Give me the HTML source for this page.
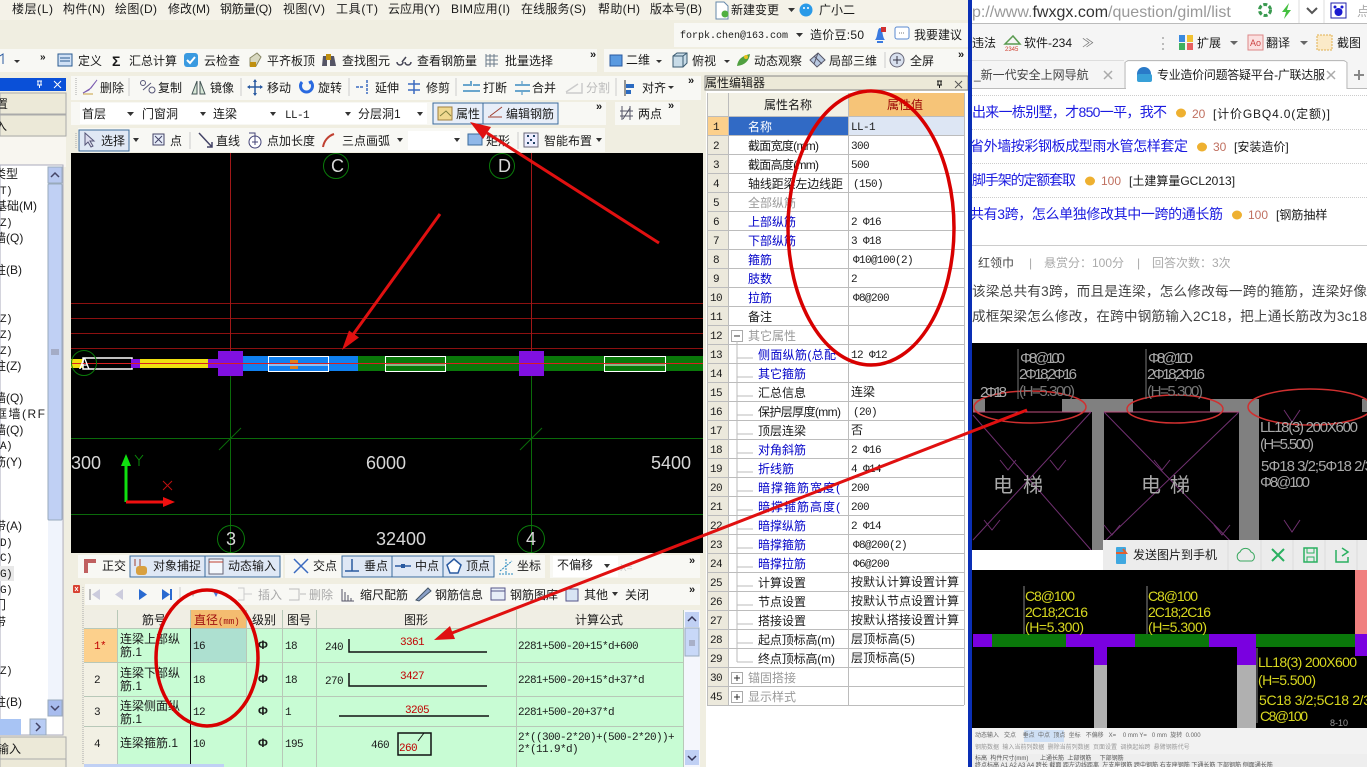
<!DOCTYPE html>
<html><head><meta charset="utf-8"><style>
html,body{margin:0;padding:0;background:#f0eee1;overflow:hidden}
svg{display:block}
text{font-family:"Liberation Sans","WenQuanYi Zen Hei","Noto Sans CJK SC",sans-serif;font-size:12px;fill:#1a1a1a;white-space:pre}
.m{font-family:"Liberation Mono","WenQuanYi Zen Hei",monospace;font-size:11px;letter-spacing:-.6px}
.g{fill:#9a9a9a}.b{fill:#0000c8}.r{fill:#c00000}
.l{font-size:14px;fill:#1a1ae0}.p{font-size:13.6px;fill:#444}
.w{font-size:18px;fill:#d8d8d8;font-family:"Liberation Sans",sans-serif}
.y{font-size:14px;fill:#d8d820;font-family:"Liberation Sans",sans-serif}
.t{font-family:"Liberation Sans","WenQuanYi Zen Hei",sans-serif;font-size:15px;fill:#a8a8a8}
</style></head><body>
<svg width="1367" height="767" viewBox="0 0 1367 767" xmlns="http://www.w3.org/2000/svg">
<!-- browser -->
<rect x="970" y="0" width="397" height="767" fill="#fff"/>
<rect x="970" y="0" width="397" height="23" fill="#fff"/>
<rect x="970" y="23" width="397" height="1" fill="#bbb"/>
<rect x="970" y="24" width="397" height="64" fill="#f5f5f5"/>
<text x="972" y="17" style="font-size:16px;fill:#999">p://www.<tspan fill="#333">fwxgx.com</tspan>/question/giml/list</text>
<circle cx="1265" cy="10" r="5.5" fill="none" stroke="#3a9a50" stroke-width="3" stroke-dasharray="4 2"/>
<path d="M1289 3l-7 9h4l-2 7 7-9h-4z" fill="#44c040"/>
<path d="M1299 0v23M1324 0v23" stroke="#ddd"/>
<path d="M1307 8l5 5 5-5" fill="none" stroke="#555" stroke-width="2"/>
<rect x="1331" y="3" width="15" height="15" fill="#fff" stroke="#22a"/><circle cx="1338.500" cy="12" r="4" fill="#1a1ad0"/><circle cx="1335" cy="7" r="1.500" fill="#1a1ad0"/><circle cx="1342" cy="7" r="1.500" fill="#1a1ad0"/>
<text x="1357" y="16" style="font-size:13px;fill:#aaa">点</text>
<text x="972" y="47" style="font-size:12px">违法</text>
<path d="M1005 44l8-8 7 8z" fill="none" stroke="#5a9a50" stroke-width="1.500"/><text x="1005" y="51" style="font-size:6px;fill:#d04030">2345</text>
<text x="1024" y="47">软件-234</text>
<text x="1082" y="47" style="fill:#777">≫</text>
<path d="M1163 37v2M1163 43v2M1163 48v2" stroke="#bbb" stroke-width="2"/>
<rect x="1179" y="35" width="6" height="7" fill="#3a8ae0"/><rect x="1187" y="35" width="6" height="7" fill="#f0c030"/><rect x="1179" y="43" width="6" height="7" fill="#40b060"/><rect x="1187" y="43" width="6" height="7" fill="#e86060"/>
<text x="1197" y="47">扩展</text><path d="M1230 41h8l-4 4z" fill="#666"/>
<rect x="1248" y="35" width="15" height="15" fill="#fbe0e0" stroke="#d88"/><text x="1250" y="46" style="font-size:9px;fill:#c44">Ao</text>
<text x="1266" y="47">翻译</text><path d="M1300 41h8l-4 4z" fill="#666"/>
<rect x="1317" y="35" width="15" height="15" fill="#fbeac8" stroke="#e0b050" stroke-dasharray="2 1"/>
<text x="1337" y="47">截图</text>
<rect x="970" y="60" width="154" height="1" fill="#ddd"/><rect x="970" y="61" width="154" height="27" fill="#f5f5f5"/>
<text x="974" y="79" style="font-size:12px;fill:#444">_新一代安全上网导航</text>
<path d="M1104 71l8 8M1112 71l-8 8" stroke="#aaa" stroke-width="1.500"/>
<path d="M970 88.500h155v-26l3-2h216l3 2v26h20" fill="#f5f5f5" stroke="#bbb"/>
<rect x="1126" y="62" width="220" height="28" fill="#fff"/>
<path d="M972 88.500h154" stroke="#bbb"/>
<circle cx="1144" cy="74" r="7" fill="#2a7ac8"/><rect x="1137" y="74" width="15" height="8" rx="2" fill="#38a0d8"/>
<text x="1157" y="79" style="font-size:12px" textLength="168">专业造价问题答疑平台-广联达服</text>
<rect x="1325" y="64" width="18" height="22" fill="#fff"/>
<path d="M1327 71l8 8M1335 71l-8 8" stroke="#aaa" stroke-width="1.500"/>
<path d="M1354 75h10M1359 70v10" stroke="#888" stroke-width="2"/>
<rect x="970" y="89" width="397" height="254" fill="#fff"/>
<path d="M970 95.500h397M970 129.500h397M970 163.500h397M970 197.500h397" stroke="#ccc" stroke-dasharray="1 1"/>
<g>
<text x="972" y="117" class="l" textLength="195">出来一栋别墅，才850一平，我不</text>
<ellipse cx="1181" cy="113" rx="5" ry="4.500" fill="#eeb030"/><text x="1192" y="118" style="font-size:12px;fill:#c07060">20</text><text x="1213" y="118" style="font-size:12px" textLength="117">[计价GBQ4.0(定额)]</text>
<text x="970" y="151" class="l" textLength="218">省外墙按彩钢板成型雨水管怎样套定</text>
<ellipse cx="1202" cy="147" rx="5" ry="4.500" fill="#eeb030"/><text x="1213" y="151" style="font-size:12px;fill:#c07060">30</text><text x="1234" y="151" style="font-size:12px">[安装造价]</text>
<text x="972" y="185" class="l" textLength="104">脚手架的定额套取</text>
<ellipse cx="1090" cy="181" rx="5" ry="4.500" fill="#eeb030"/><text x="1101" y="185" style="font-size:12px;fill:#c07060">100</text><text x="1129" y="185" style="font-size:12px">[土建算量GCL2013]</text>
<text x="970" y="219" class="l" textLength="253">共有3跨，怎么单独修改其中一跨的通长筋</text>
<ellipse cx="1237" cy="215" rx="5" ry="4.500" fill="#eeb030"/><text x="1248" y="219" style="font-size:12px;fill:#c07060">100</text><text x="1276" y="219" style="font-size:12px">[钢筋抽样</text>
</g>
<rect x="970" y="245" width="397" height="1" fill="#ccc"/>
<text x="978" y="267" style="font-size:12px;fill:#444">红领巾</text>
<text x="1029" y="267" style="fill:#aaa">|</text>
<text x="1044" y="267" style="font-size:12px;fill:#aaa">悬赏分：100分</text>
<text x="1137" y="267" style="fill:#aaa">|</text>
<text x="1152" y="267" style="font-size:12px;fill:#aaa">回答次数：3次</text>
<text x="972" y="296" class="p" textLength="395">该梁总共有3跨，而且是连梁，怎么修改每一跨的箍筋，连梁好像</text>
<text x="972" y="321" class="p" textLength="395">成框架梁怎么修改，在跨中钢筋输入2C18，把上通长筋改为3c18</text>
<!-- image 1 -->
<rect x="972" y="343" width="395" height="207" fill="#000"/>
<rect x="973" y="399" width="394" height="13" fill="#808080"/>
<rect x="985" y="399" width="77" height="13" fill="#000"/><rect x="1133" y="399" width="77" height="13" fill="#000"/><rect x="1259" y="399" width="103" height="13" fill="#000"/>
<rect x="1092" y="412" width="12" height="138" fill="#808080"/><rect x="1239" y="412" width="20" height="138" fill="#808080"/>
<path d="M973 412h118M1104 412h135" stroke="#c05080"/>
<path d="M973 415l118 135M1091 412L973 540M1104 412l135 138M1239 412l-135 130" stroke="#703070"/>
<path d="M1016 460l-8 10-8-10M1066 460l-8 10-8-10M1000 520l-8 10-8-10M1170 460l-8 10-8-10M1120 525l-8 10-8-10M1230 525l-8 10-8-10M1300 410l-8 12-8-12M1300 520l-8 12-8-12" fill="none" stroke="#703070"/>
<g fill="none" stroke="#d03030"><ellipse cx="1030" cy="407" rx="56" ry="16" stroke-width="1.500"/><ellipse cx="1175" cy="409" rx="48" ry="14" stroke-width="1.500"/><ellipse cx="1310" cy="407" rx="62" ry="18" stroke-width="1.500"/></g>
<g>
<path d="M1018 349v50M1146 349v50" stroke="#777"/>
<text x="1020" y="363" class="t" textLength="45">Φ8@100</text><text x="1019" y="379" class="t" textLength="58">2Φ18;2Φ16</text><text x="1019" y="396" class="t" style="fill:#777" textLength="56">(H=5.300)</text>
<text x="1148" y="363" class="t" textLength="45">Φ8@100</text><text x="1147" y="379" class="t" textLength="58">2Φ18;2Φ16</text><text x="1147" y="396" class="t" style="fill:#777" textLength="56">(H=5.300)</text>
<text x="980" y="397" class="t" textLength="27">2Φ18</text>
<text x="1260" y="432" class="t" textLength="98">LL18(3) 200X600</text><text x="1260" y="449" class="t" textLength="54">(H=5.500)</text><text x="1261" y="471" class="t" textLength="112">5Φ18 3/2;5Φ18 2/3</text><text x="1260" y="487" class="t" textLength="50">Φ8@100</text>
<text x="993" y="492" style="font-size:20px;fill:#aaa">电</text><text x="1023" y="492" style="font-size:20px;fill:#aaa">梯</text>
<text x="1141" y="492" style="font-size:20px;fill:#aaa">电</text><text x="1170" y="492" style="font-size:20px;fill:#aaa">梯</text>
</g>
<rect x="972" y="550" width="131" height="20" fill="#fff"/>
<rect x="1103" y="540" width="264" height="30" fill="#ececec"/>
<rect x="1116" y="547" width="10" height="17" rx="1" fill="#40a8e0"/><path d="M1116 553h10l-3-4" stroke="#e06030" stroke-width="2" fill="none"/>
<text x="1133" y="559">发送图片到手机</text>
<path d="M1228 540v30M1261 540v30M1293 540v30M1325 540v30M1357 540v30" stroke="#ddd"/>
<path d="M1240 561a5 5 0 0 1 0-9 6 6 0 0 1 11 0 5 5 0 0 1 1 9z" fill="none" stroke="#3aa860"/>
<path d="M1272 549l12 12M1284 549l-12 12" stroke="#2ab060" stroke-width="2"/>
<rect x="1304" y="548" width="13" height="14" fill="none" stroke="#2ab060" stroke-width="1.500"/><path d="M1307 548v5h7v-5M1307 562v-5h7v5" fill="none" stroke="#2ab060"/>
<path d="M1336 550h-0v12h12v-5M1342 548l6 4-6 4" fill="none" stroke="#2ab060" stroke-width="1.500"/>
<!-- image 2 -->
<rect x="972" y="570" width="395" height="158" fill="#000"/>
<rect x="1355" y="570" width="12" height="64" fill="#f08080"/>
<rect x="973" y="634" width="394" height="13" fill="#7a00e0"/>
<rect x="992" y="634" width="74" height="13" fill="#0a780a"/><rect x="1135" y="634" width="74" height="13" fill="#0a780a"/><rect x="1256" y="634" width="99" height="13" fill="#0a780a"/>
<rect x="1094" y="647" width="13" height="18" fill="#7a00e0"/><rect x="1094" y="665" width="13" height="63" fill="#b0b0b0"/>
<rect x="1237" y="647" width="19" height="18" fill="#7a00e0"/><rect x="1237" y="665" width="19" height="63" fill="#b0b0b0"/>
<rect x="1355" y="647" width="12" height="9" fill="#7a00e0"/>
<path d="M1024 586v48M1147 586v48M1257 648v75" stroke="#888"/>
<text x="1025" y="601" class="y" textLength="50">C8@100</text><text x="1025" y="617" class="y" textLength="63">2C18;2C16</text><text x="1025" y="632" class="y" textLength="59">(H=5.300)</text>
<text x="1148" y="601" class="y" textLength="50">C8@100</text><text x="1148" y="617" class="y" textLength="63">2C18;2C16</text><text x="1148" y="632" class="y" textLength="59">(H=5.300)</text>
<text x="1258" y="667" class="y" textLength="99">LL18(3) 200X600</text><text x="1258" y="685" class="y" textLength="58">(H=5.500)</text><text x="1259" y="705" class="y" textLength="112">5C18 3/2;5C18 2/3</text><text x="1260" y="721" class="y" textLength="48">C8@100</text>
<text x="1330" y="726" style="font-size:9px;fill:#999">8-10</text>
<rect x="972" y="728" width="395" height="39" fill="#f2f2f2"/>
<rect x="1024" y="730" width="40" height="12" fill="#cfe0f5"/>
<text x="975" y="737" style="font-size:6px;fill:#666">动态输入   交点    垂点  中点  顶点  坐标   不偏移   X=    0 mm Y=   0 mm  旋转  0.000</text>
<text x="975" y="749" style="font-size:6px;fill:#999">钢筋数据  输入当前列数据  删除当前列数据  页面设置  调换起始跨  悬臂钢筋代号</text>
<rect x="972" y="754" width="395" height="13" fill="#eee"/>
<text x="975" y="760" style="font-size:6px;fill:#555">标高  构件尺寸(mm)       上通长筋  上部钢筋     下部钢筋</text>
<text x="975" y="767" style="font-size:6px;fill:#555">终点标高 A1 A2 A3 A4 跨长 截面 距左边线距离  左支座钢筋 跨中钢筋 右支座钢筋 下通长筋 下部钢筋 侧面通长筋</text>

<!-- app -->
<rect x="0" y="0" width="968" height="767" fill="#f0eee1"/>
<rect x="0" y="0" width="968" height="20" fill="#f4f2e8"/>
<g>
<text x="12" y="13" textLength="41">楼层(L)</text><text x="63" y="13" textLength="42">构件(N)</text><text x="115" y="13" textLength="42">绘图(D)</text><text x="168" y="13" textLength="42">修改(M)</text><text x="220" y="13" textLength="52">钢筋量(Q)</text><text x="283" y="13" textLength="42">视图(V)</text><text x="336" y="13" textLength="42">工具(T)</text><text x="388" y="13" textLength="52">云应用(Y)</text><text x="451" y="13" textLength="59">BIM应用(I)</text><text x="521" y="13" textLength="65">在线服务(S)</text><text x="598" y="13" textLength="42">帮助(H)</text><text x="650" y="13" textLength="52">版本号(B)</text>
</g>
<path d="M716 2h8l4 4v13h-12z" fill="#fff" stroke="#68a"/><circle cx="725" cy="14" r="3.500" fill="#50b040"/>
<text x="731" y="14">新建变更</text><path d="M788 8h7l-3.500 4z" fill="#333"/>
<circle cx="806" cy="10" r="6.500" fill="#2a9ae8"/><circle cx="804" cy="8" r="1" fill="#fff"/><circle cx="808" cy="8" r="1" fill="#fff"/>
<text x="819" y="14">广小二</text>
<rect x="674" y="23" width="294" height="24" fill="#f8f8f4"/>
<text x="680" y="38" style="font-size:10px;font-family:'Liberation Mono'" textLength="108">forpk.chen@163.com</text>
<path d="M796 33h7l-3.500 4z" fill="#333"/>
<text x="810" y="39" textLength="54">造价豆:50</text>
<path d="M875 40c3-3 2-12 5-12s2 9 5 12z" fill="#3a7ae0"/><rect x="881" y="27" width="5" height="5" fill="#d03030"/><path d="M877 42h6" stroke="#3a7ae0" stroke-width="2"/>
<rect x="895" y="27" width="14" height="12" rx="2" fill="#fff" stroke="#5a8ad0"/><path d="M899 33h6" stroke="#777" stroke-dasharray="1 1"/>
<text x="914" y="39">我要建议</text>

<!-- row 1 toolbar -->
<rect x="0" y="49" width="52" height="23" fill="#f8f8f4"/><rect x="52" y="49" width="545" height="23" fill="#f8f8f4"/><rect x="604" y="49" width="364" height="23" fill="#f8f8f4"/>
<path d="M0 56l3-2v10" stroke="#2a5aa0" fill="none"/><path d="M14 60h6l-3 3z" fill="#333"/>
<text x="40" y="60" style="font-size:10px;font-weight:bold">»</text>
<rect x="58" y="54" width="14" height="12" fill="#cfe0f5" stroke="#2a5a90"/><path d="M60 58h10M60 61h10" stroke="#2a5a90"/>
<text x="78" y="65">定义</text>
<text x="112" y="66" style="font-size:14px;font-weight:bold">Σ</text>
<text x="129" y="65">汇总计算</text>
<rect x="184" y="53" width="14" height="14" rx="3" fill="#3a9ae0"/><path d="M187 60l3 3 5-6" stroke="#fff" stroke-width="2" fill="none"/>
<text x="204" y="65">云检查</text>
<path d="M250 66v-8l7-5 4 4-5 9z" fill="#d8d8c0" stroke="#886"/><rect x="250" y="62" width="6" height="5" fill="#c09010"/>
<text x="267" y="65">平齐板顶</text>
<path d="M323 56h4v10h-5zM330 56h4l2 10h-6z" fill="#556"/><path d="M326 54h5v6h-5z" fill="#c09010"/>
<text x="342" y="65">查找图元</text>
<path d="M397 62a3 3 0 1 0 6 0M405 62a3 3 0 1 0 6 0M402 62l4-5" fill="none" stroke="#445" stroke-width="1.500"/>
<text x="417" y="65">查看钢筋量</text>
<path d="M486 54v13M490 54v13M494 54v13M486 56h12M486 60h12M486 64h12" stroke="#6a7a8a"/>
<text x="505" y="65">批量选择</text>
<text x="590" y="58" style="font-size:11px;font-weight:bold">»</text>
<rect x="610" y="55" width="12" height="11" fill="#5a9ae0" stroke="#2a5aa0"/>
<text x="626" y="64">二维</text><path d="M656 60h6l-3 3z" fill="#333"/>
<path d="M673 56l4-3h10v10l-4 4h-10z" fill="#c8dce8" stroke="#3a5a70"/><path d="M673 56h10v11M683 56l4-3" fill="none" stroke="#3a5a70"/>
<text x="692" y="65">俯视</text><path d="M724 60h6l-3 3z" fill="#333"/>
<path d="M737 66c1-7 5-10 13-12-1 7-5 11-13 12z" fill="#50a040"/><circle cx="746" cy="57" r="2" fill="#e8c020"/>
<text x="754" y="65">动态观察</text>
<path d="M810 60l8-7 7 7-8 7z" fill="#b8c8e0" stroke="#556"/><path d="M814 56l8 8M818 53l-4 11" stroke="#556"/>
<text x="829" y="65">局部三维</text>
<path d="M885 52v16" stroke="#ccc"/>
<circle cx="897" cy="60" r="7" fill="#d8e0ee" stroke="#667"/><path d="M893 60h8M897 56v8" stroke="#334"/>
<text x="910" y="65">全屏</text>
<text x="958" y="58" style="font-size:11px;font-weight:bold">»</text>

<!-- left panel -->
<rect x="0" y="78" width="66" height="13" fill="#0a50d8"/>
<path d="M37 81h5M38 81v4M41 81v4M37 85h5M39.500 85v3" stroke="#fff"/>
<path d="M54 81l7 7M61 81l-7 7" stroke="#fff"/>
<rect x="0" y="93" width="66" height="21" fill="#ece9d8" stroke="#aaa"/><rect x="0" y="115" width="66" height="21" fill="#ece9d8" stroke="#aaa"/>
<text x="-4" y="108">置</text><text x="-5" y="130">入</text>
<rect x="0" y="137" width="66" height="30" fill="#f8f6f0"/>
<rect x="0" y="165" width="63" height="570" fill="#fff" stroke="#aab"/>
<rect x="48" y="167" width="14" height="16" fill="#b8c8f0" stroke="#9ab"/>
<path d="M51 177l4-4 4 4" stroke="#446" stroke-width="1.500" fill="none"/>
<rect x="48" y="184" width="14" height="520" fill="#f0f4fc"/>
<rect x="48" y="184" width="14" height="336" rx="1" fill="#c0d0f4" stroke="#9ab"/>
<path d="M51 350h8M51 352h8M51 354h8" stroke="#889"/>
<rect x="48" y="700" width="14" height="16" fill="#a8bcee" stroke="#9ab"/><path d="M51 706l4 4 4-4" stroke="#446" stroke-width="1.500" fill="none"/>
<rect x="0" y="719" width="21" height="16" fill="#a8c4f4"/>
<rect x="30" y="719" width="16" height="16" fill="#b8ccf4" stroke="#9ab"/><path d="M36 723l4 4-4 4" stroke="#446" stroke-width="1.500" fill="none"/>
<g>
<rect x="0" y="566" width="14" height="15" fill="#e8e8e8"/>
<text x="-6" y="178">类型</text><text x="0" y="194" class="m">T)</text><text x="-5" y="210">基础(M)</text><text x="0" y="226" class="m">Z)</text><text x="-6" y="242">墙(Q)</text><text x="-6" y="274">柱(B)</text><text x="0" y="322" class="m">Z)</text><text x="0" y="338" class="m">Z)</text><text x="0" y="354" class="m">Z)</text><text x="-6" y="370">柱(Z)</text><text x="-6" y="402">墙(Q)</text><text x="-5" y="418" textLength="50">框墙(RF</text><text x="-6" y="434">墙(Q)</text><text x="0" y="449" class="m">A)</text><text x="-6" y="466">筋(Y)</text><text x="-6" y="530">带(A)</text><text x="0" y="546" class="m">D)</text><text x="0" y="561" class="m">C)</text><text x="0" y="577" class="m">G)</text><text x="0" y="593" class="m">G)</text><text x="-6" y="609">门</text><text x="-6" y="626">带</text><text x="0" y="674" class="m">Z)</text><text x="-6" y="706">柱(B)</text>
</g>
<rect x="0" y="737" width="66" height="22" fill="#ece9d8" stroke="#aaa"/><rect x="0" y="759" width="66" height="10" fill="#ece9d8" stroke="#aaa"/>
<text x="-3" y="753">输入</text>

<!-- toolbars row 2-->
<rect x="71" y="76" width="630" height="24" fill="#f8f8f4"/>
<path d="M83 93l6-3 8-10-6 8-8 5z" fill="#7a5ab0" stroke="#7a5ab0"/><path d="M83 94h10" stroke="#c8a040"/>
<text x="100" y="92">删除</text><path d="M129 78v18" stroke="#ccc"/>
<circle cx="143" cy="83" r="2.500" fill="none" stroke="#557"/><circle cx="152" cy="90" r="3" fill="none" stroke="#557"/><path d="M143 90l8-7" stroke="#557"/>
<text x="158" y="92">复制</text>
<path d="M192 94l5-13v13zM205 94l-5-13v13z" fill="#d8e8d8" stroke="#455"/>
<text x="210" y="92">镜像</text><path d="M241 78v18" stroke="#ccc"/>
<path d="M255 80v15M248 87h14" stroke="#2a5aa0" stroke-width="1.500"/><path d="M253 82l2-3 2 3zM253 93l2 3 2-3zM250 85l-3 2 3 2zM260 85l3 2-3 2z" fill="#2a5aa0"/>
<text x="267" y="92">移动</text>
<path d="M302 82a6 6 0 1 0 9 0l-2 1" fill="none" stroke="#2a6ae0" stroke-width="3"/>
<text x="318" y="92">旋转</text><path d="M349 78v18" stroke="#ccc"/>
<path d="M356 87h8M367 80v14" stroke="#3a6ac0" stroke-width="1.500" stroke-dasharray="3 1"/>
<text x="375" y="92">延伸</text>
<path d="M408 84h12M408 90h12M414 80v14" stroke="#3a6ac0" stroke-width="1.500"/>
<text x="426" y="92">修剪</text><path d="M456 78v18" stroke="#ccc"/>
<path d="M463 85h7M473 85h7M463 91h17M471 81v5" stroke="#3a8ac0" stroke-width="1.500"/>
<text x="483" y="92">打断</text>
<path d="M515 85h15M515 91h15" stroke="#3a8ac0" stroke-width="1.500"/><path d="M522 81v3M522 92v3" stroke="#3a8ac0"/>
<text x="532" y="92">合并</text>
<path d="M566 92l12-8M566 93h16v-10" stroke="#ccc" fill="none" stroke-width="1.500"/>
<text x="586" y="92" class="g" style="fill:#bbb">分割</text><path d="M616 78v18" stroke="#ccc"/>
<path d="M625 80v16" stroke="#333"/><rect x="626" y="84" width="8" height="4" fill="#2a6ac0"/><rect x="626" y="90" width="5" height="4" fill="#2a6ac0"/>
<text x="642" y="92">对齐</text><path d="M668 86h6l-3 3z" fill="#333"/>
<text x="688" y="84" style="font-size:11px;font-weight:bold">»</text>
<path d="M76 78v18M76 104v18M76 133v15M76 558v16M83 587v178" stroke="#aaa" stroke-dasharray="1 1"/>

<!-- row 3 -->
<rect x="71" y="102" width="535" height="23" fill="#f8f8f4"/>
<rect x="80" y="103" width="347" height="21" fill="#fff"/>
<text x="82" y="118">首层</text><path d="M127 112h7l-3.500 4z" fill="#333"/>
<text x="142" y="118">门窗洞</text><path d="M200 112h6l-3 4z" fill="#333"/>
<text x="213" y="118">连梁</text><path d="M270 112h6l-3 4z" fill="#333"/>
<text x="285" y="118" class="m">LL-1</text><path d="M345 112h6l-3 4z" fill="#333"/>
<text x="358" y="118">分层洞1</text><path d="M417 112h6l-3 4z" fill="#333"/>
<rect x="433" y="103" width="50" height="21" fill="#e8eef8" stroke="#3a6a9a"/>
<rect x="483" y="103" width="75" height="21" fill="#e8eef8" stroke="#3a6a9a"/>
<rect x="438" y="107" width="14" height="13" fill="#f0d890" stroke="#a08040"/><path d="M440 116l6-5 5 5" fill="none" stroke="#808040"/>
<text x="456" y="118">属性</text>
<path d="M488 117h14M490 116l12-9" stroke="#a04030"/><text x="506" y="118">编辑钢筋</text>
<text x="596" y="110" style="font-size:11px;font-weight:bold">»</text>
<rect x="615" y="102" width="65" height="23" fill="#f8f8f4"/>
<path d="M622 106v14M630 106v14M620 111h13M620 116h13M623 119l7-11" stroke="#556"/>
<text x="638" y="118">两点</text>
<text x="668" y="109" style="font-size:11px;font-weight:bold">»</text>

<!-- row 4 -->
<rect x="78" y="128" width="527" height="24" fill="#f8f8f4"/>
<rect x="79" y="130" width="50" height="21" fill="#e0e8f4" stroke="#3a6a9a"/>
<path d="M85 133v12l3-3 3 5 2-1-3-5h4z" fill="#dde" stroke="#557"/>
<text x="101" y="145">选择</text><path d="M133 138h6l-3 4z" fill="#333"/>
<rect x="153" y="134" width="11" height="11" fill="#e8eefa" stroke="#446"/><path d="M155 136l7 7M162 136l-7 7" stroke="#446"/>
<text x="170" y="145">点</text><path d="M190 132v17" stroke="#ccc"/>
<path d="M199 133l13 14M207 147h5v-5" fill="none" stroke="#446" stroke-width="1.500"/>
<text x="216" y="145">直线</text>
<circle cx="255" cy="142" r="6" fill="#fff" stroke="#447"/><path d="M252 142h6M255 139v6M249 133h6v6" stroke="#447" fill="none"/>
<text x="267" y="145">点加长度</text>
<path d="M323 147c1-6 5-11 11-13" fill="none" stroke="#c04030" stroke-width="2"/>
<text x="342" y="145">三点画弧</text><path d="M397 138h6l-3 4z" fill="#333"/>
<rect x="408" y="131" width="52" height="19" fill="#fff"/><path d="M454 138h6l-3 4z" fill="#333"/>
<rect x="468" y="134" width="14" height="11" fill="#90b8e8" stroke="#3a6a9a"/>
<text x="486" y="145">矩形</text><path d="M518 132v17" stroke="#ccc"/>
<rect x="524" y="133" width="14" height="14" fill="#eef" stroke="#667"/><path d="M527 136h2M533 136h2M527 143h2M533 143h2M530 140h2" stroke="#246" stroke-width="2"/>
<text x="544" y="145">智能布置</text><path d="M596 138h6l-3 4z" fill="#333"/>

<!-- canvas -->
<rect x="71" y="153" width="632" height="400" fill="#000"/>
<path d="M71 303.500h632M71 318.500h632M71 333.500h632M71 348.500h632" stroke="#8c1010"/>
<path d="M230.500 153v210M531.500 153v210" stroke="#a01818"/>
<path d="M230.500 363v190M531.500 363v190M71 438.500h632M71 514.500h632" stroke="#0a6a0a"/>
<path d="M219 450l22-22M520 450l22-22" stroke="#0a6a0a"/>
<rect x="71" y="359" width="12" height="9" fill="#f0e010"/>
<rect x="83" y="358" width="49" height="11" fill="#000" stroke="#fff" stroke-width="1.500"/>
<rect x="131" y="359" width="9" height="9" fill="#8010e0"/>
<rect x="140" y="359" width="68" height="9" fill="#f0e010"/>
<rect x="208" y="359" width="22" height="9" fill="#8010e0"/>
<rect x="230" y="356" width="128" height="15" fill="#1080f0"/>
<rect x="358" y="356" width="345" height="15" fill="#0a780a"/>
<rect x="218" y="351" width="25" height="25" fill="#8010e0"/>
<rect x="519" y="351" width="25" height="25" fill="#8010e0"/>
<g fill="none" stroke="#fff"><rect x="268.500" y="356.500" width="60" height="15"/><rect x="385.500" y="356.500" width="60" height="15"/><rect x="604.500" y="356.500" width="61" height="15"/></g>
<path d="M71 363.500h632" stroke="#d82020"/>
<path d="M268 365h61M385 365h61M604 365h62" stroke="#fff"/>
<rect x="290" y="360" width="8" height="3" fill="#e08020"/><rect x="290" y="366" width="8" height="3" fill="#e08020"/>
<g fill="none" stroke="#0a7a0a"><circle cx="336" cy="166" r="12.500"/><circle cx="502" cy="166" r="12.500"/><circle cx="84" cy="363" r="12.500"/><circle cx="231" cy="539" r="13.500"/><circle cx="531" cy="539" r="13.500"/></g>
<text x="331" y="172" class="w">C</text><text x="498" y="172" class="w">D</text>
<text x="79" y="369" style="font-size:16px;fill:#fff">A</text>
<text x="226" y="545" class="w">3</text><text x="526" y="545" class="w">4</text>
<text x="71" y="469" class="w">300</text><text x="366" y="469" class="w">6000</text><text x="651" y="469" class="w">5400</text><text x="376" y="545" class="w">32400</text>
<path d="M126 502v-40" stroke="#10e010" stroke-width="3"/><path d="M121 466l5-12 5 12z" fill="#10e010"/>
<path d="M126 502h40" stroke="#f01010" stroke-width="3"/><path d="M163 497l12 5-12 5z" fill="#f01010"/>
<path d="M135 455l4 5 4-5M139 460v6" stroke="#0a8a0a" fill="none"/>
<path d="M163 481l9 9M172 481l-9 9" stroke="#c01010"/>

<!-- status toolbar -->
<rect x="71" y="553" width="632" height="26" fill="#f0eee1"/>
<rect x="78" y="555" width="205" height="23" fill="#f8f8f4"/><rect x="285" y="555" width="260" height="23" fill="#f8f8f4"/><rect x="550" y="555" width="150" height="23" fill="#f8f8f4"/>
<path d="M84 559h12v4h-8v10h-4z" fill="#c06060"/>
<text x="102" y="570">正交</text>
<rect x="130" y="556" width="75" height="21" fill="#dfe8f5" stroke="#3a6a9a"/><rect x="205" y="556" width="75" height="21" fill="#dfe8f5" stroke="#3a6a9a"/>
<rect x="136" y="566" width="11" height="9" rx="3" fill="#d8a040"/><path d="M135 559v7M140 559v7" stroke="#a04030"/>
<text x="153" y="570">对象捕捉</text>
<rect x="209" y="559" width="14" height="15" fill="#f4f8fc" stroke="#667"/><path d="M209 562h14" stroke="#c04030"/>
<text x="228" y="570">动态输入</text>
<path d="M294 559l14 14M308 559l-14 14" stroke="#3a6ac0" stroke-width="1.500"/>
<text x="313" y="570">交点</text>
<rect x="342" y="556" width="50" height="21" fill="#dfe8f5" stroke="#3a6a9a"/><rect x="392" y="556" width="51" height="21" fill="#dfe8f5" stroke="#3a6a9a"/><rect x="443" y="556" width="51" height="21" fill="#dfe8f5" stroke="#3a6a9a"/>
<path d="M345 571h14M352 559v12" stroke="#2a5aa0" stroke-width="1.500"/>
<text x="364" y="570">垂点</text>
<path d="M395 566h16" stroke="#2a5aa0" stroke-width="1.500"/><rect x="401" y="564" width="4" height="4" fill="#2a5aa0"/>
<text x="415" y="570">中点</text>
<path d="M454 559l7 6-3 8h-8l-3-8z" fill="#fff" stroke="#2a5aa0" stroke-width="1.500"/>
<text x="466" y="570">顶点</text>
<path d="M499 574h14M506 559v15M500 571l12-10" stroke="#2a8ac0" stroke-dasharray="2 1"/>
<text x="517" y="570">坐标</text>
<rect x="553" y="556" width="65" height="21" fill="#fff"/>
<text x="557" y="569">不偏移</text><path d="M604 564h6l-3 4z" fill="#333"/>
<text x="620" y="571" style="font-size:10px;fill:#ccc">X=</text>
<text x="689" y="564" style="font-size:11px;font-weight:bold">»</text>

<!-- rebar toolbar -->
<rect x="85" y="584" width="615" height="21" fill="#f8f8f4"/>
<rect x="73" y="585" width="7" height="8" rx="1" fill="#d84030"/><path d="M75 587l3 4M78 587l-3 4" stroke="#fff"/>
<path d="M90 589v11" stroke="#bbb" stroke-width="2"/><path d="M100 589l-8 5.500 8 5.500z" fill="#ccd"/>
<path d="M123 589l-8 5.500 8 5.500z" fill="#ccd"/>
<path d="M139 589l8 5.500-8 5.500z" fill="#2a6ad0"/>
<path d="M162 589l8 5.500-8 5.500z" fill="#2a6ad0"/><path d="M171 589v11" stroke="#2a6ad0" stroke-width="2"/>
<path d="M180 587v15" stroke="#ccc"/>
<path d="M190 591h6l-3 6z" fill="#bbb"/><path d="M213 591h6l-3 6z" fill="#4a78d8"/>
<path d="M238 588h6v12h-6M244 594h8" stroke="#ccc" fill="none"/>
<text x="258" y="599" style="fill:#aaa">插入</text>
<path d="M289 589h10v11h-10M300 594h6" stroke="#bbb" fill="none"/>
<text x="309" y="599" style="fill:#aaa">删除</text>
<path d="M342 589v12h12M345 592v9M348 595v6M351 598v3" stroke="#556" fill="none"/>
<text x="360" y="599">缩尺配筋</text>
<path d="M416 600l12-12 3 3-12 10z" fill="#8aa0c8" stroke="#456"/>
<text x="435" y="599">钢筋信息</text>
<rect x="491" y="588" width="14" height="12" fill="#e8eef8" stroke="#558"/><path d="M491 591h14" stroke="#558"/>
<text x="510" y="599">钢筋图库</text>
<rect x="566" y="589" width="12" height="12" fill="#d8e4f4" stroke="#558"/>
<text x="584" y="599">其他</text><path d="M612 592h6l-3 4z" fill="#333"/>
<text x="625" y="599">关闭</text>
<text x="689" y="593" style="font-size:11px;font-weight:bold">»</text>

<!-- rebar table -->
<rect x="84" y="610" width="616" height="157" fill="#fff"/>
<rect x="84" y="610" width="599" height="18" fill="#f0eee4"/>
<rect x="190" y="610" width="56" height="18" fill="#f4bc70"/>
<rect x="117" y="628" width="566" height="139" fill="#c8fcd4"/>
<rect x="84" y="628" width="33" height="34" fill="#fcd08c"/>
<rect x="84" y="662" width="33" height="105" fill="#f2f0e4"/>
<rect x="191" y="628" width="55" height="34" fill="#ade0d0"/>
<path d="M84 628.500h599M84 662.500h599M84 696.500h599M84 726.500h599M117.500 610v157M190.500 610v18M246.500 610v157M282.500 610v157M316.500 610v157M516.500 610v157M683.500 610v157" stroke="#b8c8b8"/>
<path d="M190.500 628v139" stroke="#111"/>
<text x="142" y="624">筋号</text>
<text x="194" y="624" style="fill:#a01010">直径<tspan class="m" style="font-size:9px;fill:#a01010;letter-spacing:0">(mm)</tspan></text>
<text x="252" y="624">级别</text><text x="287" y="624">图号</text><text x="404" y="624">图形</text><text x="575" y="624">计算公式</text>
<text x="94" y="649" class="m r">1*</text><text x="94" y="683" class="m">2</text><text x="94" y="715" class="m">3</text><text x="94" y="747" class="m">4</text>
<text x="120" y="643">连梁上部纵</text><text x="120" y="656">筋.1</text>
<text x="120" y="677">连梁下部纵</text><text x="120" y="690">筋.1</text>
<text x="120" y="710">连梁侧面纵</text><text x="120" y="723">筋.1</text>
<text x="120" y="747">连梁箍筋.1</text>
<text x="193" y="649" class="m">16</text><text x="193" y="683" class="m">18</text><text x="193" y="715" class="m">12</text><text x="193" y="747" class="m">10</text>
<g><text x="258" y="649" style="font-weight:bold">Φ</text><text x="258" y="683" style="font-weight:bold">Φ</text><text x="258" y="715" style="font-weight:bold">Φ</text><text x="258" y="747" style="font-weight:bold">Φ</text></g>
<text x="285" y="649" class="m">18</text><text x="285" y="683" class="m">18</text><text x="285" y="715" class="m">1</text><text x="285" y="747" class="m">195</text>
<text x="325" y="650" class="m">240</text><path d="M349 639v13h138" fill="none" stroke="#111" stroke-width="1.500"/>
<text x="400" y="645" class="m r">3361</text>
<text x="325" y="684" class="m">270</text><path d="M349 673v13h138" fill="none" stroke="#111" stroke-width="1.500"/>
<text x="400" y="679" class="m r">3427</text>
<path d="M339 716h150" stroke="#111" stroke-width="1.500"/>
<text x="405" y="713" class="m r">3205</text>
<text x="371" y="748" class="m">460</text>
<rect x="398" y="733" width="33" height="22" fill="none" stroke="#111" stroke-width="1.500"/><path d="M424 733l-6 8M424 733h7v8" stroke="#111" fill="none"/>
<text x="399" y="751" class="m r">260</text>
<text x="518" y="649" class="m">2281+500-20+15*d+600</text>
<text x="518" y="683" class="m">2281+500-20+15*d+37*d</text>
<text x="518" y="715" class="m">2281+500-20+37*d</text>
<text x="518" y="740" class="m">2*((300-2*20)+(500-2*20))+</text>
<text x="518" y="752" class="m">2*(11.9*d)</text>
<rect x="684" y="610" width="16" height="157" fill="#f4f6fc"/>
<rect x="685" y="612" width="14" height="15" fill="#c0d0f4"/><path d="M688 621l4-4 4 4" stroke="#335" stroke-width="1.500" fill="none"/>
<rect x="685" y="628" width="14" height="28" fill="#c8d8f8" stroke="#9ab"/>
<path d="M689 641h6M689 643h6M689 645h6" stroke="#889"/>
<rect x="685" y="750" width="14" height="15" fill="#c0d0f4"/><path d="M688 756l4 4 4-4" stroke="#335" stroke-width="1.500" fill="none"/>
<rect x="84" y="764" width="140" height="3" fill="#c0d0f4"/>

<!-- property panel -->
<rect x="705" y="76" width="263" height="14" fill="#ece9d8" stroke="#888"/>
<text x="705" y="87" style="font-size:12px">属性编辑器</text>
<path d="M937 81h5M938 81v4M941 81v4M937 85h5M939.500 85v3" stroke="#111"/>
<path d="M955 81l7 7M962 81l-7 7" stroke="#555"/>
<rect x="706" y="91" width="262" height="676" fill="#fff"/>
<rect x="707" y="93" width="257" height="23" fill="#f2f0e4"/>
<rect x="848" y="93" width="116" height="23" fill="#f6c478"/>
<rect x="707" y="116" width="21" height="589" fill="#ece9dc"/>
<rect x="707" y="116.500" width="21" height="19" fill="#fcd08c"/>
<rect x="728" y="116.500" width="120" height="19" fill="#316ac5"/>
<rect x="848" y="116.500" width="116" height="19" fill="#dde6f4"/>
<path d="M707 116.500H964M707 135.500H964M707 154.500H964M707 173.500H964M707 192.500H964M707 211.500H964M707 230.500H964M707 249.500H964M707 268.500H964M707 287.500H964M707 306.500H964M707 325.500H964M707 344.500H964M707 363.500H964M707 382.500H964M707 401.500H964M707 420.500H964M707 439.500H964M707 458.500H964M707 477.500H964M707 496.500H964M707 515.500H964M707 534.500H964M707 553.500H964M707 572.500H964M707 591.500H964M707 610.500H964M707 629.500H964M707 648.500H964M707 667.500H964M707 686.500H964M707 705.500H964M728.500 93V705M848.500 93V705M964.500 93V705M707.500 93V705" stroke="#bcbcbc" fill="none"/>
<text x="764" y="109" style="font-size:12px">属性名称</text>
<text x="887" y="109" style="font-size:12px;fill:#900">属性值</text>
<g>
<text x="713" y="130" class="m">1</text><text x="713" y="149" class="m">2</text><text x="713" y="168" class="m">3</text><text x="713" y="187" class="m">4</text><text x="713" y="206" class="m">5</text><text x="713" y="225" class="m">6</text><text x="713" y="244" class="m">7</text><text x="713" y="263" class="m">8</text><text x="713" y="282" class="m">9</text><text x="710" y="301" class="m">10</text><text x="710" y="320" class="m">11</text><text x="710" y="339" class="m">12</text><text x="710" y="358" class="m">13</text><text x="710" y="377" class="m">14</text><text x="710" y="396" class="m">15</text><text x="710" y="415" class="m">16</text><text x="710" y="434" class="m">17</text><text x="710" y="453" class="m">18</text><text x="710" y="472" class="m">19</text><text x="710" y="491" class="m">20</text><text x="710" y="510" class="m">21</text><text x="710" y="529" class="m">22</text><text x="710" y="548" class="m">23</text><text x="710" y="567" class="m">24</text><text x="710" y="586" class="m">25</text><text x="710" y="605" class="m">26</text><text x="710" y="624" class="m">27</text><text x="710" y="643" class="m">28</text><text x="710" y="662" class="m">29</text><text x="710" y="681" class="m">30</text><text x="710" y="700" class="m">45</text>
</g>
<text x="748" y="131" style="fill:#fff">名称</text>
<text x="748" y="150" textLength="71">截面宽度(mm)</text><text x="748" y="169" textLength="71">截面高度(mm)</text><text x="748" y="188" textLength="95">轴线距梁左边线距</text>
<text x="748" y="207" class="g">全部纵筋</text>
<text x="748" y="226" class="b">上部纵筋</text><text x="748" y="245" class="b">下部纵筋</text><text x="748" y="264" class="b">箍筋</text><text x="748" y="283" class="b">肢数</text><text x="748" y="302" class="b">拉筋</text>
<text x="748" y="321">备注</text>
<text x="748" y="340" class="g">其它属性</text>
<rect x="731.500" y="330.500" width="11" height="11" fill="#fff" stroke="#aaa"/><path d="M734 336h6" stroke="#333"/>
<path d="M737 341v321M737 358h16M737 377h16M737 396h16M737 415h16M737 434h16M737 453h16M737 472h16M737 491h16M737 510h16M737 529h16M737 548h16M737 567h16M737 586h16M737 605h16M737 624h16M737 643h16M737 662h16" stroke="#bbb" fill="none"/>
<text x="758" y="359" class="b" textLength="78">侧面纵筋(总配</text>
<text x="758" y="378" class="b">其它箍筋</text>
<text x="758" y="397">汇总信息</text><text x="758" y="416" textLength="83">保护层厚度(mm)</text><text x="758" y="435">顶层连梁</text>
<text x="758" y="454" class="b">对角斜筋</text><text x="758" y="473" class="b">折线筋</text>
<text x="758" y="492" class="b" textLength="82">暗撑箍筋宽度(</text><text x="758" y="511" class="b" textLength="82">暗撑箍筋高度(</text>
<text x="758" y="530" class="b">暗撑纵筋</text><text x="758" y="549" class="b">暗撑箍筋</text><text x="758" y="568" class="b">暗撑拉筋</text>
<text x="758" y="587">计算设置</text><text x="758" y="606">节点设置</text><text x="758" y="625">搭接设置</text>
<text x="758" y="644" textLength="77">起点顶标高(m)</text><text x="758" y="663" textLength="77">终点顶标高(m)</text>
<text x="748" y="682" class="g">锚固搭接</text><text x="748" y="701" class="g">显示样式</text>
<rect x="731.500" y="672.500" width="11" height="11" fill="#fff" stroke="#aaa"/><path d="M734 678h6M737 675v6" stroke="#333"/>
<rect x="731.500" y="691.500" width="11" height="11" fill="#fff" stroke="#aaa"/><path d="M734 697h6M737 694v6" stroke="#333"/>
<text x="851" y="130" class="m">LL-1</text><text x="851" y="149" class="m">300</text><text x="851" y="168" class="m">500</text><text x="853" y="187" class="m">(150)</text>
<text x="851" y="225" class="m">2 Φ16</text><text x="851" y="244" class="m">3 Φ18</text><text x="853" y="263" class="m">Φ10@100(2)</text><text x="851" y="282" class="m">2</text><text x="853" y="301" class="m">Φ8@200</text>
<text x="851" y="358" class="m">12 Φ12</text><text x="851" y="396">连梁</text><text x="853" y="415" class="m">(20)</text><text x="851" y="434">否</text>
<text x="851" y="453" class="m">2 Φ16</text><text x="851" y="472" class="m">4 Φ14</text><text x="851" y="491" class="m">200</text><text x="851" y="510" class="m">200</text><text x="851" y="529" class="m">2 Φ14</text><text x="853" y="548" class="m">Φ8@200(2)</text><text x="853" y="567" class="m">Φ6@200</text>
<text x="851" y="586" textLength="108">按默认计算设置计算</text><text x="851" y="605" textLength="108">按默认节点设置计算</text><text x="851" y="624" textLength="108">按默认搭接设置计算</text>
<text x="851" y="643" textLength="64">层顶标高(5)</text><text x="851" y="662" textLength="64">层顶标高(5)</text>

<!-- separator -->
<rect x="968" y="0" width="4" height="767" fill="#0a2fb5"/>

<!-- annotations -->
<g fill="none" stroke="#d80000" stroke-width="3.500">
<ellipse cx="207" cy="658" rx="51" ry="68"/>
<ellipse cx="871" cy="228" rx="83" ry="137"/>
</g>
<g stroke="#e01010" stroke-width="3" fill="#e01010">
<path d="M659 243L487 133"/><path d="M440 214L352 336"/><path d="M1027 410L452 633"/>
</g>
<g fill="#e01010">
<path d="M470 122l21 5-8 12z"/><path d="M342 350l17-12.500-10-7z"/><path d="M434 640l21-1-5-13z"/>
</g>
</svg>
</body></html>
